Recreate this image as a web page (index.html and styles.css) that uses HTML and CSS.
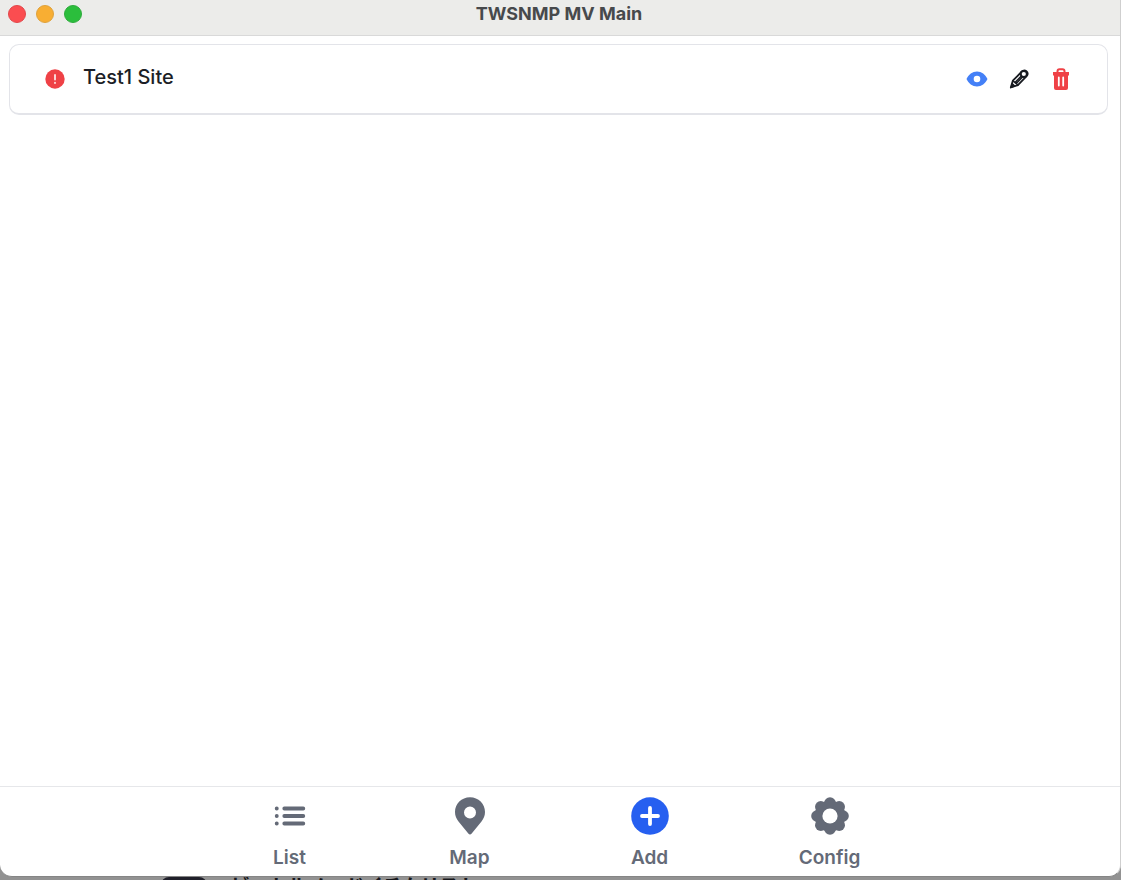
FILE: index.html
```html
<!DOCTYPE html>
<html lang="en">
<head>
<meta charset="utf-8">
<title>TWSNMP MV Main</title>
<link rel="stylesheet" href="styles.css">
</head>
<body>
<div class="window">
  <header class="titlebar">
    <div class="lights">
      <button class="light close" aria-label="Close"></button>
      <button class="light minimize" aria-label="Minimize"></button>
      <button class="light zoom" aria-label="Zoom"></button>
    </div>
    <h1 class="title">TWSNMP MV Main</h1>
  </header>
  <main class="content">
    <article class="site">
      <svg class="status" viewBox="0 0 20 20" aria-hidden="true"><circle cx="10" cy="10" r="9.7" fill="#ef4146"/><path d="M10 6v4.500M10 13.800v.2" stroke="#fbd5d6" stroke-width="2" stroke-linecap="round"/></svg>
      <h2 class="name">Test1 Site</h2>
      <div class="actions">
        <button class="action" aria-label="View"><svg viewBox="0 0 22 22"><path fill="#4480f7" fill-rule="evenodd" d="M.5 11C2.500 6.500 6.500 3.500 11 3.500S19.500 6.500 21.500 11C19.500 15.500 15.500 18.500 11 18.500S2.500 15.500.5 11zM11 7.700a3.300 3.300 0 1 0 0 6.600 3.300 3.300 0 0 0 0-6.600z"/></svg></button>
        <button class="action" aria-label="Edit"><svg viewBox="0 0 22 22" fill="none" stroke="#171a20" stroke-linecap="round" stroke-linejoin="round"><path stroke-width="1.800" d="M2.800 19.500l2-6.800 8.600-8.700c1.600-1.600 3.400-2 5-.8 1.800 1.500 1.700 3.400.2 5l-8.700 8.900z"/><path fill="#171a20" d="M2.800 19.500l1.400-4.400 2.700 2.600z"/><path stroke-width="1.500" d="M5 12.800l4.800 4M7.300 14.200l6-6.200M8.500 15.300l6-6.200"/><circle cx="15.800" cy="6" r="3" stroke-width="1.800" fill="#fff"/></svg></button>
        <button class="action" aria-label="Delete"><svg viewBox="0 0 22 22" fill="none"><path stroke="#ef4146" stroke-width="2" d="M7.500 4.500V3.300C7.500 1.900 8.200 1.200 9.500 1.200h3c1.300 0 2 .7 2 2.100v1.200"/><path fill="#ef4146" d="M3 4h16v3.500H3zM4 7h14v13a2 2 0 0 1-2 2H6a2 2 0 0 1-2-2z"/><path stroke="#fff" stroke-width="1.800" stroke-linecap="round" d="M8.800 9.500v8M13.200 9.500v8"/></svg></button>
      </div>
    </article>
  </main>
  <nav class="bottom-nav">
    <div class="tabs">
      <button class="tab"><svg class="tab-icon" viewBox="0 0 38 38" fill="none" stroke="currentColor" stroke-width="3.800" stroke-linecap="round"><path d="M13.300 11.500h19M13.300 19h19M13.300 26.500h19"/><path d="M5.700 11.500h.1M5.700 19h.1M5.700 26.500h.1"/></svg><span>List</span></button>
      <button class="tab"><svg class="tab-icon" viewBox="0 0 38 38"><path fill="currentColor" fill-rule="evenodd" d="M19 .3C10.500.3 4 6.800 4 15c0 3.700 1.300 6.700 3.500 9.400l9.800 12.200c1 1.300 2.400 1.300 3.400 0l9.800-12.200C32.700 21.700 34 18.700 34 15 34 6.800 27.500.3 19 .3zM19 9.500a6 6 0 1 0 0 12 6 6 0 0 0 0-12z"/></svg><span>Map</span></button>
      <button class="tab"><svg class="tab-icon" viewBox="0 0 38 38"><circle cx="19" cy="19" r="18.800" fill="#265ff0"/><path stroke="#fff" stroke-width="3.800" stroke-linecap="round" d="M11 19h16M19 11v16"/></svg><span>Add</span></button>
      <button class="tab"><svg class="tab-icon" viewBox="0 0 38 38" fill="currentColor"><circle cx="19" cy="19" r="15.500"/><circle cx="19" cy="6" r="5.800"/><circle cx="28.200" cy="9.800" r="5.800"/><circle cx="32" cy="19" r="5.800"/><circle cx="28.200" cy="28.200" r="5.800"/><circle cx="19" cy="32" r="5.800"/><circle cx="9.800" cy="28.200" r="5.800"/><circle cx="6" cy="19" r="5.800"/><circle cx="9.800" cy="9.800" r="5.800"/><circle cx="19" cy="19" r="7.600" fill="#fff"/></svg><span>Config</span></button>
    </div>
  </nav>
</div>
<div class="behind">
  <span class="behind-icon"></span>
  <span class="behind-text">ビートルノ・ドイチムリスト</span>
</div>
</body>
</html>
```
FILE: styles.css
```css
* { box-sizing: border-box; }
body {
  margin: 0;
  height: 100vh;
  display: flex;
  flex-direction: column;
  overflow: hidden;
  background: #929292;
  font-family: Inter, "Liberation Sans", sans-serif;
}
button {
  border: 0;
  padding: 0;
  background: none;
  font: inherit;
  color: inherit;
}
h1, h2 { margin: 0; }
svg { display: block; }

.window {
  flex: 1;
  min-height: 0;
  display: flex;
  flex-direction: column;
  overflow: hidden;
  background: #fff;
  border-right: 1px solid #cfcfcf;
  border-bottom: 1px solid #858585;
  border-radius: 0 0 12px 12px;
}
.titlebar {
  display: grid;
  grid-template-columns: 1fr auto 1fr;
  align-items: center;
  height: 36px;
  padding: 0 10px 7px 8px;
  background: #ececea;
  border-bottom: 1px solid #d9d9d9;
}
.lights { display: flex; gap: 10px; }
.light {
  width: 18px;
  height: 18px;
  border-radius: 50%;
  border: 1px solid;
}
.close { background: #fb4d50; border-color: #e2474a; }
.minimize { background: #f8ae33; border-color: #dfa23c; }
.zoom { background: #2bbe3c; border-color: #2eab3c; }
.title {
  font-size: 18px;
  line-height: 20px;
  font-weight: 700;
  color: #47494c;
}

.content { flex: 1; padding: 8px 12px 8px 9px; }
.site {
  display: flex;
  align-items: center;
  height: 71px;
  padding: 0 35px;
  border: 1px solid #e3e4e9;
  border-bottom-width: 2px;
  border-radius: 10px;
}
.status { width: 20px; height: 20px; }
.name {
  margin-left: 18px;
  padding-bottom: 4px;
  font-size: 20px;
  line-height: 24px;
  font-weight: 500;
  color: #1b1e26;
}
.actions { display: flex; gap: 20px; margin-left: auto; }
.action svg { width: 22px; height: 22px; }

.bottom-nav {
  height: 90px;
  border-top: 1px solid #e6e7ea;
  padding-right: 1px;
}
.tabs {
  display: grid;
  grid-template-columns: repeat(4, 1fr);
  height: 100%;
  max-width: 720px;
  margin: 0 auto;
}
.tab {
  display: flex;
  flex-direction: column;
  align-items: center;
  padding-top: 10px;
  gap: 11px;
  font-size: 19px;
  line-height: 24px;
  font-weight: 600;
  color: #646a77;
}
.tab-icon { width: 38px; height: 38px; }

.behind {
  display: flex;
  gap: 24px;
  height: 3px;
  padding-left: 161px;
  overflow: hidden;
}
.behind-icon {
  width: 46px;
  height: 24px;
  border-radius: 8px;
  background: #20202a;
}
.behind-text {
  font-family: "Noto Sans CJK JP", sans-serif;
  font-size: 19px;
  line-height: 16px;
  font-weight: 700;
  color: #18181c;
  white-space: nowrap;
}
```
